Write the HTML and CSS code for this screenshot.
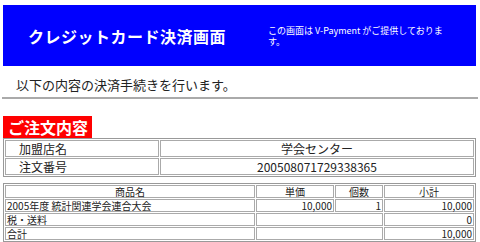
FILE: index.html
```html
<!DOCTYPE html>
<html lang="ja">
<head>
    <meta charset="UTF-8">
    <title>クレジットカード決済画面</title>
    <link rel="stylesheet" href="styles.css">
</head>
<body>

<!-- Header -->
<div class="header">
    <div class="header-title">クレジットカード決済画面</div>
    <div class="header-note">この画面は V-Payment がご提供しております。</div>
</div>

<p class="lead">以下の内容の決済手続きを行います。</p>
<hr class="rule">

<!-- Order -->
<div class="section-title">ご注文内容</div>

<table class="shop">
    <tr>
        <td class="label">加盟店名</td>
        <td class="value">学会センター</td>
    </tr>
    <tr>
        <td class="label">注文番号</td>
        <td class="value">200508071729338365</td>
    </tr>
</table>

<table class="items">
    <tr>
        <th class="col-name">商品名</th>
        <th class="col-price">単価</th>
        <th class="col-qty">個数</th>
        <th class="col-sub">小計</th>
    </tr>
    <tr>
        <td>2005年度 統計関連学会連合大会</td>
        <td class="num">10,000</td>
        <td class="num">1</td>
        <td class="num">10,000</td>
    </tr>
    <tr>
        <td>税・送料</td>
        <td colspan="2"></td>
        <td class="num">0</td>
    </tr>
    <tr>
        <td>合計</td>
        <td colspan="2"></td>
        <td class="num">10,000</td>
    </tr>
</table>

</body>
</html>
```

FILE: styles.css
```css
body {
    font-family: "Noto Sans CJK JP", "DejaVu Sans", sans-serif;
    background-color: white;
    color: #222;
    margin: 0;
    padding: 5px 4px 0 3px;
}

.header {
    display: flex;
    align-items: center;
    height: 61px;
    background-color: #0000ff;
    color: white;
    padding-left: 25px;
}
.header-title {
    font-size: 16px;
    font-weight: bold;
    letter-spacing: 0.5px;
    width: 240px;
}
.header-note {
    font-size: 9px;
    line-height: 11px;
    width: 180px;
}

.lead {
    font-size: 13px;
    margin: 9px 0 0 13px;
    line-height: 20px;
}
.rule {
    border: none;
    border-top: 2px solid #aaa;
    margin: 2px -2px 0 -1px;
}

.section-title {
    width: fit-content;
    margin-top: 17px;
    background-color: red;
    color: white;
    font-size: 16px;
    font-weight: bold;
    line-height: 22px;
    padding: 0 4px 0 5px;
}

table {
    border-collapse: separate;
    border-spacing: 1px;
    border: 1px solid #999;
    width: 473px;
}
td, th {
    border: 1px solid #aaa;
    padding: 0;
}

.shop td {
    font-size: 12px;
    line-height: 15px;
}
.shop .label {
    width: 139px;
    padding-left: 13px;
}
.shop .value {
    text-align: center;
}

.items {
    margin-top: 6px;
}
.items td, .items th {
    font-size: 10px;
    line-height: 11px;
    font-weight: normal;
    padding: 0 1px;
}
.items th {
    text-align: center;
}
.items .col-name { width: 246px; }
.items .col-price { width: 74px; }
.items .col-qty { width: 44px; }
.items .num {
    text-align: right;
}
```
